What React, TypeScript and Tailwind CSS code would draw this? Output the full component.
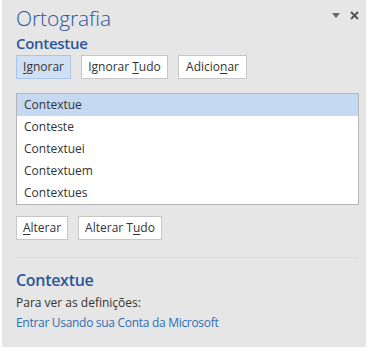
const SUGESTOES = ["Contextue", "Conteste", "Contextuei", "Contextuem", "Contextues"];

function Botao({ children, ativo, className }: { children: React.ReactNode; ativo?: boolean; className?: string }) {
  return (
    <button
      className={
        "h-[24px] border text-[12px] leading-none text-[#333] " +
        (ativo ? "bg-[#cfe0f5] border-[#a9c6ea] " : "bg-white border-[#c6c6c6] ") +
        (className ?? "")
      }
    >
      {children}
    </button>
  );
}

export default function App() {
  return (
    <div className="w-[370px] h-[351px] bg-white font-['Open_Sans',sans-serif]">
      <div className="ml-[2px] w-[364px] h-[347px] bg-[#e6e6e6] px-[14px] pt-[3px] flex flex-col">
        {/* Header */}
        <div className="flex items-start justify-between">
          <h1 className="text-[21px] leading-[30px] font-light text-[#2b579a] tracking-[-0.1px]">Ortografia</h1>
          <div className="flex items-center gap-[10px] mt-[8px] mr-[-7px]">
            <svg width="8" height="5" viewBox="0 0 8 5">
              <path d="M0 0 L8 0 L4 5 Z" fill="#666" />
            </svg>
            <svg width="9" height="9" viewBox="0 0 9 9">
              <path d="M1 1 L8 8 M8 1 L1 8" stroke="#555" strokeWidth="2" />
            </svg>
          </div>
        </div>
        <p className="text-[15px] leading-[20px] font-semibold text-[#2b579a] tracking-[-0.3px]">Contestue</p>

        {/* Acoes */}
        <div className="flex gap-[10px] mt-[2px]">
          <Botao ativo className="w-[55px]">
            <span className="underline underline-offset-2">I</span>gnorar
          </Botao>
          <Botao className="w-[87px]">
            Ignorar <span className="underline underline-offset-2">T</span>udo
          </Botao>
          <Botao className="w-[69px]">
            Adicio<span className="underline underline-offset-2">n</span>ar
          </Botao>
        </div>

        {/* Lista de sugestoes */}
        <div className="mt-[14px] w-[343px] border border-[#b5b5b5] bg-white flex flex-col">
          {SUGESTOES.map((s, i) => (
            <div
              key={s}
              className={"h-[22px] px-[7px] flex items-center text-[12px] text-[#333] " + (i === 0 ? "bg-[#c5d9f2]" : "")}
            >
              {s}
            </div>
          ))}
        </div>

        <div className="flex gap-[10px] mt-[11px]">
          <Botao className="w-[52px]">
            <span className="underline underline-offset-2">A</span>lterar
          </Botao>
          <Botao className="w-[84px]">
            Alterar T<span className="underline underline-offset-2">u</span>do
          </Botao>
        </div>

        <div className="mt-[17px] w-[343px] border-t border-[#dadada]" />

        {/* Definicoes */}
        <p className="mt-[12px] text-[16px] leading-[20px] font-semibold text-[#2b579a] tracking-[-0.3px]">Contextue</p>
        <p className="mt-[5px] text-[12px] leading-[16px] text-[#333]">Para ver as definições:</p>
        <a className="mt-[4px] text-[12px] leading-[16px] text-[#2e6db4] tracking-[-0.3px]">Entrar Usando sua Conta da Microsoft</a>
      </div>
    </div>
  );
}
